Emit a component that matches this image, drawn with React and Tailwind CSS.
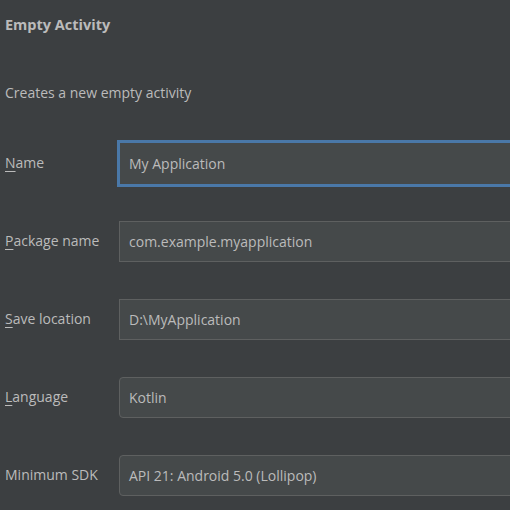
import React from "react";

const fields = [
    { label: "Name", key: "N", rest: "ame", value: "My Application", focused: true },
    { label: "Package name", key: "P", rest: "ackage name", value: "com.example.myapplication" },
    { label: "Save location", key: "S", rest: "ave location", value: "D:\\MyApplication" },
    { label: "Language", key: "L", rest: "anguage", value: "Kotlin", rounded: true },
    { label: "Minimum SDK", key: "", rest: "Minimum SDK", value: "API 21: Android 5.0 (Lollipop)", rounded: true },
];

const App = () => {
    return (
        <div
            className="w-[510px] h-[510px] overflow-hidden bg-[#3c3f41] text-[#bbbbbb] text-[14px] pl-[5px]"
            style={{ fontFamily: '"Open Sans", "Noto Sans", sans-serif' }}
        >
            <div className="h-[50px] flex items-center font-bold text-[14.5px]">Empty Activity</div>
            <div className="h-[74px] pt-[33px] leading-[20px]">Creates a new empty activity</div>

            {fields.map((f) => (
                <div key={f.label} className="h-[78px] flex items-center">
                    <div className="w-[114px] shrink-0 leading-[20px]">
                        {f.key && <span className="underline underline-offset-[3px]">{f.key}</span>}
                        {f.rest}
                    </div>
                    {f.focused ? (
                        <div className="-ml-[2px] h-[47px] w-[420px] shrink-0 border-[3px] border-[#4a78a8] bg-[#45494a] flex items-center pl-[9px]">
                            {f.value}
                        </div>
                    ) : (
                        <div
                            className={`h-[41px] w-[420px] shrink-0 border border-[#5e6060] bg-[#45494a] flex items-center pl-[9px] ${
                                f.rounded ? "rounded-[4px]" : ""
                            }`}
                        >
                            {f.value}
                        </div>
                    )}
                </div>
            ))}
        </div>
    );
};

export default App;
